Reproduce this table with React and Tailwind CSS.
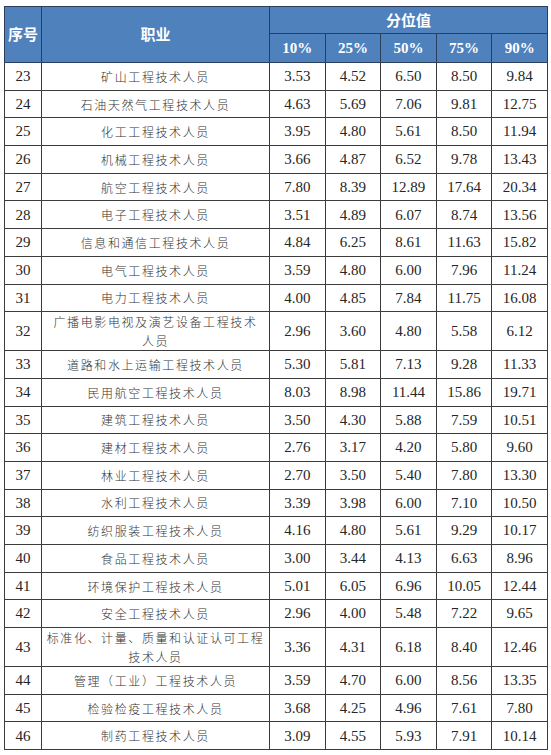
const rows = [
  ['23', ['矿山工程技术人员'], ['3.53', '4.52', '6.50', '8.50', '9.84']],
  ['24', ['石油天然气工程技术人员'], ['4.63', '5.69', '7.06', '9.81', '12.75']],
  ['25', ['化工工程技术人员'], ['3.95', '4.80', '5.61', '8.50', '11.94']],
  ['26', ['机械工程技术人员'], ['3.66', '4.87', '6.52', '9.78', '13.43']],
  ['27', ['航空工程技术人员'], ['7.80', '8.39', '12.89', '17.64', '20.34']],
  ['28', ['电子工程技术人员'], ['3.51', '4.89', '6.07', '8.74', '13.56']],
  ['29', ['信息和通信工程技术人员'], ['4.84', '6.25', '8.61', '11.63', '15.82']],
  ['30', ['电气工程技术人员'], ['3.59', '4.80', '6.00', '7.96', '11.24']],
  ['31', ['电力工程技术人员'], ['4.00', '4.85', '7.84', '11.75', '16.08']],
  ['32', ['广播电影电视及演艺设备工程技术', '人员'], ['2.96', '3.60', '4.80', '5.58', '6.12']],
  ['33', ['道路和水上运输工程技术人员'], ['5.30', '5.81', '7.13', '9.28', '11.33']],
  ['34', ['民用航空工程技术人员'], ['8.03', '8.98', '11.44', '15.86', '19.71']],
  ['35', ['建筑工程技术人员'], ['3.50', '4.30', '5.88', '7.59', '10.51']],
  ['36', ['建材工程技术人员'], ['2.76', '3.17', '4.20', '5.80', '9.60']],
  ['37', ['林业工程技术人员'], ['2.70', '3.50', '5.40', '7.80', '13.30']],
  ['38', ['水利工程技术人员'], ['3.39', '3.98', '6.00', '7.10', '10.50']],
  ['39', ['纺织服装工程技术人员'], ['4.16', '4.80', '5.61', '9.29', '10.17']],
  ['40', ['食品工程技术人员'], ['3.00', '3.44', '4.13', '6.63', '8.96']],
  ['41', ['环境保护工程技术人员'], ['5.01', '6.05', '6.96', '10.05', '12.44']],
  ['42', ['安全工程技术人员'], ['2.96', '4.00', '5.48', '7.22', '9.65']],
  ['43', ['标准化、计量、质量和认证认可工程', '技术人员'], ['3.36', '4.31', '6.18', '8.40', '12.46']],
  ['44', ['管理（工业）工程技术人员'], ['3.59', '4.70', '6.00', '8.56', '13.35']],
  ['45', ['检验检疫工程技术人员'], ['3.68', '4.25', '4.96', '7.61', '7.80']],
  ['46', ['制药工程技术人员'], ['3.09', '4.55', '5.93', '7.91', '10.14']],
]

const serif = "font-['Liberation_Serif','Times_New_Roman',serif]"
const cjk = "font-['Noto_Sans_CJK_SC',sans-serif]"

function rowHeight(lines, no) {
  if (lines.length === 1) return 'h-[27.7px]'
  return no === '32' ? 'h-[37px]' : 'h-[39px]'
}

export default function App() {
  return (
    <div className="min-h-screen bg-white pl-[4px] pt-[6px]">
      <table className="w-[543px] table-fixed border-collapse text-[#262626]">
        <colgroup>
          <col className="w-[37px]" />
          <col className="w-[228px]" />
          <col className="w-[55.6px]" />
          <col className="w-[55.6px]" />
          <col className="w-[55.6px]" />
          <col className="w-[55.6px]" />
          <col className="w-[55.6px]" />
        </colgroup>
        <thead className="bg-[#4f81bd] text-white">
          <tr className="h-[27px]">
            <th rowSpan={2} className={`border border-[#2c3e5c] p-0 text-[15px] font-bold ${cjk}`}>序号</th>
            <th rowSpan={2} className={`border border-[#2c3e5c] p-0 text-[15px] font-bold ${cjk}`}>职业</th>
            <th colSpan={5} className={`border border-[#2c3e5c] p-0 text-[15px] font-bold ${cjk}`}>分位值</th>
          </tr>
          <tr className="h-[29px]">
            {['10%', '25%', '50%', '75%', '90%'].map((p) => (
              <th key={p} className={`border border-[#2c3e5c] p-0 text-[15px] font-bold ${serif}`}>{p}</th>
            ))}
          </tr>
        </thead>
        <tbody>
          {rows.map(([no, job, vals]) => (
            <tr key={no} className={rowHeight(job, no)}>
              <td className={`border border-[#3c3c3c] p-0 text-center text-[15px] ${serif}`}>{no}</td>
              <td className={`whitespace-nowrap border border-[#3c3c3c] p-0 text-center text-[12px] font-light leading-[19px] tracking-[1.6px] text-[#333] ${cjk}`}>
                {job.map((l) => (
                  <div key={l}>{l}</div>
                ))}
              </td>
              {vals.map((v, i) => (
                <td key={i} className={`border border-[#3c3c3c] p-0 text-center text-[15px] ${serif}`}>{v}</td>
              ))}
            </tr>
          ))}
        </tbody>
      </table>
    </div>
  )
}
